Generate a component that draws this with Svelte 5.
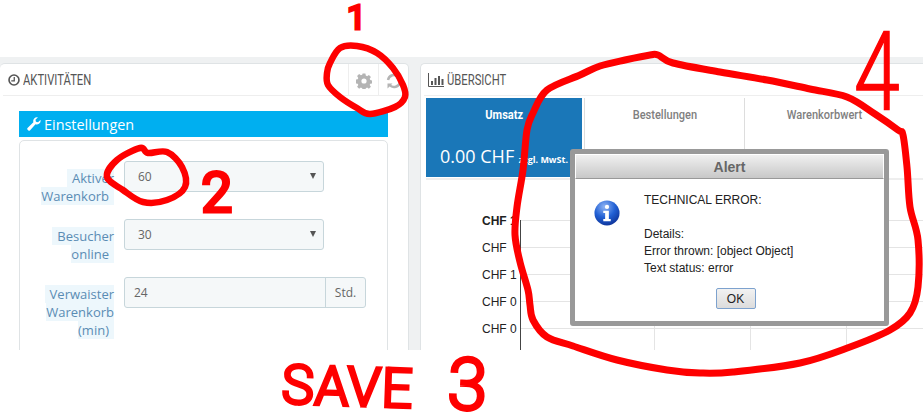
<script>
  const kpis = [
    { label: 'Umsatz', value: '0.00 CHF', note: 'zzgl. MwSt.', active: true },
    { label: 'Bestellungen' },
    { label: 'Warenkorbwert' }
  ];

  const axisLabels = ['CHF 1', 'CHF', 'CHF 1', 'CHF 0', 'CHF 0'];

  // closed catmull-rom curve through the marker points
  const smooth = (pts) => {
    const n = pts.length;
    let d = `M${pts[0][0]} ${pts[0][1]}`;
    for (let i = 0; i < n; i++) {
      const [p0, p1, p2, p3] = [pts[(i + n - 1) % n], pts[i], pts[(i + 1) % n], pts[(i + 2) % n]];
      const c1 = [p1[0] + (p2[0] - p0[0]) / 6, p1[1] + (p2[1] - p0[1]) / 6];
      const c2 = [p2[0] - (p3[0] - p1[0]) / 6, p2[1] - (p3[1] - p1[1]) / 6];
      d += `C${c1[0].toFixed(1)} ${c1[1].toFixed(1)} ${c2[0].toFixed(1)} ${c2[1].toFixed(1)} ${p2[0]} ${p2[1]}`;
    }
    return d;
  };

  const gearLoop = smooth([
    [330, 63], [340, 48], [357, 46], [377, 53], [393, 68], [403, 85], [405, 97],
    [395, 107], [370, 114], [357, 108], [340, 97], [328, 85], [327, 73]
  ]);

  const selectLoop = smooth([
    [148, 153], [167, 152], [182, 167], [185, 187], [167, 200], [143, 202],
    [123, 190], [107, 177], [117, 160], [140, 148]
  ]);

  const dialogLoop = smooth([
    [533, 113], [547, 90], [580, 75], [600, 66], [625, 60], [650, 55], [658, 55], [673, 63],
    [720, 72], [767, 80], [810, 89], [847, 97], [875, 114], [898, 130], [903, 135],
    [907, 167], [910, 207], [918, 240], [918, 287], [910, 313], [890, 330], [850, 347],
    [800, 363], [733, 372], [700, 373], [667, 370], [617, 360], [573, 346], [547, 337],
    [533, 320], [530, 305], [528, 290], [520, 262], [515, 235], [517, 207], [523, 170], [527, 130]
  ]);
</script>

<div class="page">
  <div class="backdrop">
    <section class="panel left">
      <header class="panel-head">
        <h3>
          <svg class="head-icon" viewBox="0 0 14 14" aria-hidden="true">
            <circle cx="7" cy="7" r="5.8" fill="none" stroke="#555" stroke-width="1.9" />
            <path d="M7.300 3.400V7.900H3.800" fill="none" stroke="#555" stroke-width="1.500" />
          </svg>
          <span class="cond">AKTIVITÄTEN</span>
        </h3>
        <div class="head-tools">
          <span class="tool">
            <svg viewBox="0 0 16 16" width="16" height="16" aria-hidden="true">
              <path fill="#b4b4b4" fill-rule="evenodd" d="M6.600 0.500h2.800l.4 2.100 1.300.6 1.800-1.200 2 2-1.200 1.800.6 1.300 2.100.4v2.800l-2.100.4-.6 1.300 1.200 1.800-2 2-1.800-1.200-1.300.6-.4 2.100H6.600l-.4-2.100-1.300-.6-1.800 1.200-2-2 1.200-1.800-.6-1.300-2.100-.4V6.600l2.100-.4.6-1.300L1.100 3.100l2-2 1.800 1.200 1.300-.6zM8 5.400a2.600 2.600 0 1 0 0 5.200 2.600 2.600 0 0 0 0-5.200z" />
            </svg>
          </span>
          <span class="tool">
            <svg viewBox="0 0 16 16" width="16" height="16" aria-hidden="true">
              <path d="M2 7a6 6 0 0 1 10.400-3M14 9a6 6 0 0 1-10.400 3" fill="none" stroke="#b4b4b4" stroke-width="2.400" />
              <path d="M14.500 0.500v5h-5zM1.500 15.500v-5h5z" fill="#b4b4b4" />
            </svg>
          </span>
        </div>
      </header>

      <div class="settings">
        <div class="settings-bar">
          <svg viewBox="0 0 16 16" width="14" height="14" aria-hidden="true">
            <path fill="#fff" d="M15.600 4.200a4.400 4.400 0 0 1-5.900 4.200L3.600 15a1.900 1.900 0 0 1-2.700-.1 1.900 1.900 0 0 1 0-2.700l6.400-6.300A4.400 4.400 0 0 1 12.500.3L9.700 3l.5 2.500 2.400.5 2.700-2.600c.2.3.3.5.3.800z" />
          </svg>
          Einstellungen
        </div>
        <div class="settings-box">
          <div class="field">
            <span class="field-label"><span>Aktiver Warenkorb</span></span>
            <div class="select">60</div>
          </div>
          <div class="field">
            <span class="field-label"><span>Besucher online</span></span>
            <div class="select">30</div>
          </div>
          <div class="field">
            <span class="field-label"><span>Verwaister Warenkorb (min)</span></span>
            <div class="input-group">
              <div class="input">24</div>
              <div class="addon">Std.</div>
            </div>
          </div>
        </div>
      </div>
    </section>

    <section class="panel right">
      <header class="panel-head">
        <h3>
          <svg class="head-icon wide" viewBox="0 0 16 14" aria-hidden="true">
            <path d="M.5 0v13.500H16" fill="none" stroke="#555" stroke-width="1" />
            <path d="M3 8h2v4H3zM6.500 5h2v7h-2zM10 3h2v9h-2zM13.500 6h2v6h-2z" fill="#555" />
          </svg>
          <span class="cond">ÜBERSICHT</span>
        </h3>
      </header>

      <div class="kpis">
        {#each kpis as kpi}
          <div class="kpi" class:active={kpi.active}>
            <div class="kpi-label"><span>{kpi.label}</span></div>
            {#if kpi.value}
              <div class="kpi-value">{kpi.value} <small>{kpi.note}</small></div>
            {/if}
          </div>
        {/each}
      </div>

      <div class="chart">
        <div class="y-axis">
          {#each axisLabels as label, i}
            <span class:strong={i === 0}>{label}</span>
          {/each}
        </div>
        <div class="plot">
          <div class="grid-h"></div>
          <div class="grid-v"></div>
        </div>
      </div>
    </section>
  </div>

  <div class="alert">
    <div class="alert-title">Alert</div>
    <div class="alert-body">
      <svg class="alert-icon" viewBox="0 0 28 28" aria-hidden="true">
        <defs>
          <radialGradient id="info" cx="0.4" cy="0.25" r="0.85">
            <stop offset="0" stop-color="#8fb4f4" />
            <stop offset="0.5" stop-color="#2160d4" />
            <stop offset="1" stop-color="#0a2a8c" />
          </radialGradient>
        </defs>
        <circle cx="14" cy="14" r="13.500" fill="url(#info)" />
        <circle cx="14" cy="7.500" r="2.300" fill="#fff" />
        <path d="M10 11.500h6v9h2v2.500h-8v-2.500h2v-6.500h-2z" fill="#fff" />
      </svg>
      <div class="alert-text">
        <p>TECHNICAL ERROR:</p>
        <p class="gap">Details:</p>
        <p>Error thrown: [object Object]</p>
        <p>Text status: error</p>
      </div>
    </div>
    <div class="alert-actions"><button type="button">OK</button></div>
  </div>

  <!-- marker scribbles on top of the screenshot -->
  <svg class="ink" viewBox="0 0 923 414" aria-hidden="true">
    <g fill="none" stroke="#fe0000" stroke-linecap="round" stroke-linejoin="round">
      <path stroke-width="6.500" d={gearLoop} />
      <path stroke-width="6.500" d={selectLoop} />
      <path stroke-width="7" d={dialogLoop} />
    </g>
  </svg>
  <span class="mark one">1</span>
  <span class="mark two">2</span>
  <span class="mark three">SAVE <span class="big">3</span></span>
  <span class="mark four">4</span>
</div>

<style>
  :global(body) {
    margin: 0;
    background: #fff;
  }

  .page {
    position: relative;
    width: 923px;
    height: 414px;
    overflow: hidden;
    background: #fff;
    font-family: "Open Sans", "Liberation Sans", sans-serif;
  }

  .backdrop {
    display: flex;
    gap: 11px;
    height: 293px;
    margin-top: 57px;
    position: absolute;
    top: 0;
    left: 0;
    width: 923px;
    padding-top: 6px;
    box-sizing: border-box;
    overflow: hidden;
    background: #eff1f2;
  }

  .panel {
    background: #fff;
    border: 1px solid #dfe3e5;
    border-radius: 5px 5px 0 0;
    box-sizing: border-box;
    height: 320px;
  }

  .left {
    width: 409px;
    flex: none;
    border-left: 0;
  }

  .right {
    flex: 1;
    border-right: 0;
    margin-right: -4px;
  }

  .panel-head {
    display: flex;
    justify-content: space-between;
    height: 31px;
    margin: 0 0 0 3px;
    border-bottom: 1px solid #eeeeee;
  }

  h3 {
    display: flex;
    align-items: center;
    gap: 3px;
    margin: 0 0 0 5px;
    font: 400 15px Roboto, "Liberation Sans", sans-serif;
    color: #555;
    white-space: nowrap;
  }

  .right h3 {
    margin-left: 4px;
  }

  .cond {
    display: inline-block;
    transform: scaleX(0.75);
    transform-origin: left center;
  }

  .head-icon {
    width: 12px;
    height: 12px;
  }

  .head-icon.wide {
    width: 16px;
    height: 14px;
  }

  .head-tools {
    display: flex;
  }

  .tool {
    display: flex;
    align-items: center;
    justify-content: center;
    width: 30px;
    padding-top: 2px;
    box-sizing: border-box;
    border-left: 1px solid #eeeeee;
    overflow: hidden;
  }

  .settings {
    margin: 15px 20px 0 19px;
  }

  .settings-bar {
    display: flex;
    align-items: center;
    gap: 3px;
    height: 26px;
    padding-left: 8px;
    background: #00aff0;
    color: #fff;
    font-size: 14.400px;
  }

  .settings-box {
    margin-top: 3px;
    padding: 20px 20px 0 0;
    border: 1px solid #dfe3e5;
    border-radius: 5px;
    height: 260px;
    box-sizing: border-box;
  }

  .field {
    display: flex;
    gap: 10px;
    margin-bottom: 14px;
  }

  .field-label {
    flex: none;
    width: 94px;
    padding-top: 8px;
    text-align: right;
    font-size: 13px;
    line-height: 18px;
    color: #5a8cb4;
  }

  .field-label span {
    padding: 0 5px;
    background: #edf7fc;
  }

  .select {
    width: 200px;
    height: 31px;
    padding-left: 13px;
    box-sizing: border-box;
    position: relative;
    background: #f5f8f9;
    border: 1px solid #c7d6db;
    border-radius: 3px;
    font-size: 12px;
    line-height: 29px;
    color: #666;
  }

  .select::after {
    content: "";
    position: absolute;
    top: 11px;
    right: 7px;
    border-style: solid;
    border-width: 6px 3px 0;
    border-color: #555 transparent transparent;
  }

  .input-group {
    display: flex;
    width: 242px;
    height: 31px;
    box-sizing: border-box;
    background: #f5f8f9;
    border: 1px solid #c7d6db;
    border-radius: 3px;
    font-size: 12px;
    line-height: 29px;
    color: #666;
  }

  .input {
    flex: 1;
    padding-left: 9px;
  }

  .addon {
    width: 39px;
    text-align: center;
    border-left: 1px solid #c7d6db;
  }

  .kpis {
    display: flex;
    height: 84px;
    margin: 0 0 0 5px;
    padding-bottom: 1px;
    box-sizing: border-box;
    border-bottom: 2px solid #eeeeee;
  }

  .kpi {
    flex: none;
    width: 160px;
    padding-top: 9px;
    margin-top: 2px;
    box-sizing: border-box;
    border-left: 1px solid #dddddd;
    text-align: center;
    font: 500 13px Roboto, "Liberation Sans", sans-serif;
    color: #808080;
  }

  .kpi-label span {
    display: inline-block;
    transform: scaleX(0.85);
  }

  .kpi.active {
    width: 156px;
    margin-right: 2px;
    background: #1a77b8;
    border-left: 0;
    color: #fff;
    font-weight: 700;
  }

  .kpi-value {
    margin-top: 22px;
    font: 400 18px "Open Sans", sans-serif;
    white-space: nowrap;
  }

  .kpi-value small {
    font-size: 9px;
    font-weight: 700;
  }

  .chart {
    display: flex;
    margin-top: 40px;
    margin-left: 61px;
  }

  .y-axis {
    display: flex;
    flex-direction: column;
    width: 38px;
    font: 12px/27px "Liberation Sans", sans-serif;
    color: #222;
    margin-top: -12px;
  }

  .strong {
    font-weight: 700;
  }

  .plot {
    position: relative;
    flex: 1;
    height: 130px;
    border-left: 1px solid #444;
  }

  .grid-h,
  .grid-v {
    position: absolute;
    inset: 0;
  }

  .grid-h {
    background: repeating-linear-gradient(to bottom, #e4e4e4 0 1px, transparent 1px 27px);
  }

  .grid-v {
    left: 133px;
    background: repeating-linear-gradient(to right, #e4e4e4 0 1px, transparent 1px 96px);
  }

  .alert {
    position: absolute;
    left: 570px;
    top: 149px;
    width: 319px;
    height: 177px;
    box-sizing: border-box;
    background: #fff;
    border: 5px solid #999;
    border-radius: 3px;
    font-family: "Liberation Sans", sans-serif;
    color: #222;
  }

  .alert-title {
    height: 25px;
    box-sizing: border-box;
    border: 1px solid #fff;
    border-bottom: 1px solid #999;
    background: linear-gradient(#f0f0f0, #c8c8c8);
    text-align: center;
    font-size: 14px;
    font-weight: 700;
    line-height: 24px;
    color: #666;
  }

  .alert-body {
    display: flex;
    padding: 13px 0 0 19px;
  }

  .alert-icon {
    flex: none;
    width: 26px;
    height: 26px;
    margin-top: 8px;
    margin-right: 24px;
  }

  .alert-text {
    font-size: 12px;
    line-height: 17px;
    color: #222;
  }

  .alert-text p {
    margin: 0;
  }

  .alert-text .gap {
    margin-top: 17px;
  }

  .alert-actions {
    display: flex;
    justify-content: center;
    margin-top: 11px;
    padding-left: 12px;
  }

  button {
    width: 40px;
    height: 21px;
    padding: 0;
    background: linear-gradient(#f2f2f2, #dcdcdc);
    border: 1px solid #7da2ce;
    border-radius: 2px;
    font: 12px "Liberation Sans", sans-serif;
    color: #222;
  }

  .ink {
    position: absolute;
    inset: 0;
    width: 923px;
    height: 414px;
  }

  .mark {
    position: absolute;
    color: #fe0000;
    -webkit-text-stroke: 3px #fe0000;
    font-family: Roboto, "Liberation Sans", sans-serif;
    font-weight: 400;
    line-height: 1;
    white-space: nowrap;
  }

  .one {
    left: 347px;
    top: 0;
    font-size: 34px;
  }

  .two {
    left: 201px;
    top: 165px;
    font-size: 56px;
  }

  .three {
    left: 282px;
    top: 349px;
    font-size: 54px;
    font-weight: 300;
    letter-spacing: 1px;
    word-spacing: 20px;
    -webkit-text-stroke: 3.500px #fe0000;
    line-height: 60px;
    transform-origin: left center;
    transform: rotate(2deg);
  }

  .big {
    font-size: 72px;
    line-height: 60px;
  }

  .four {
    left: 854px;
    top: 18px;
    font-size: 110px;
    font-weight: 300;
    -webkit-text-stroke: 1.500px #fe0000;
    transform-origin: left top;
    transform: scaleX(0.75);
  }
</style>
